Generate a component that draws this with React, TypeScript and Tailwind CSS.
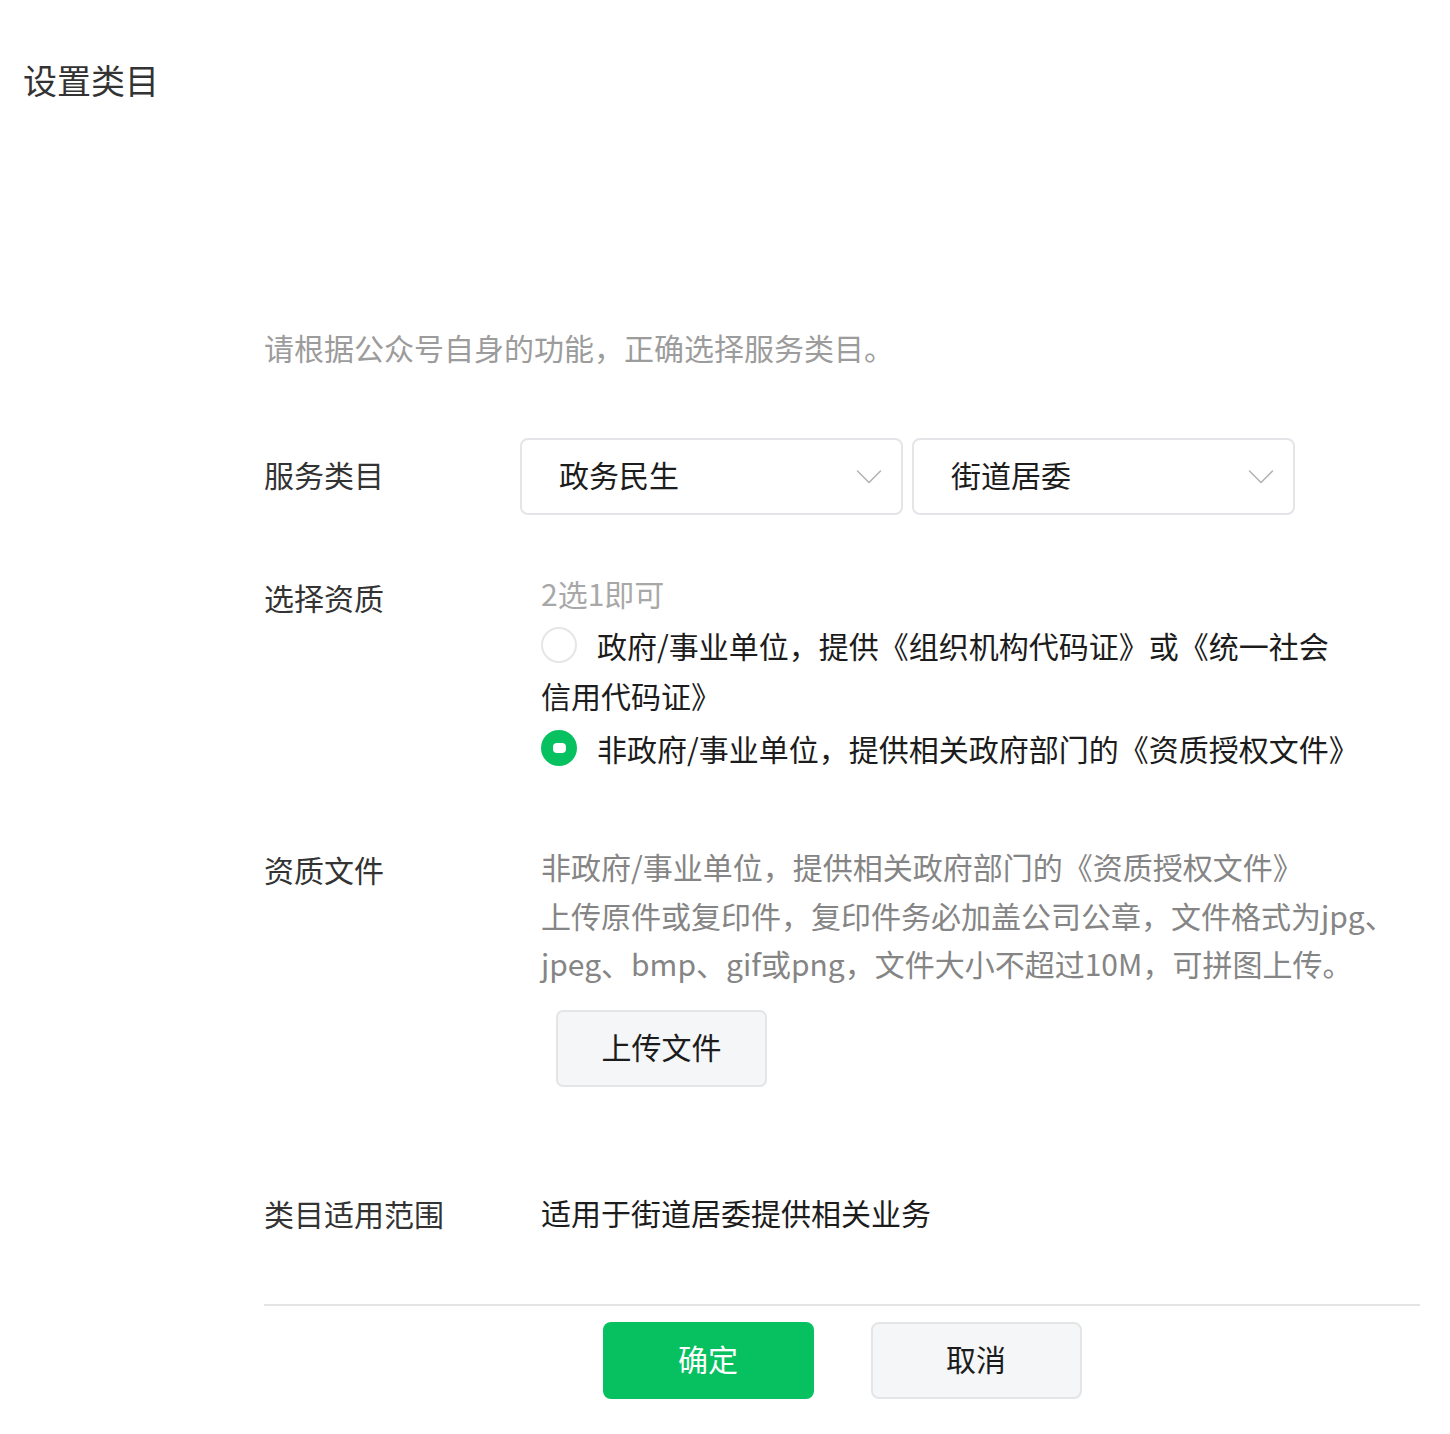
const font = "font-['PingFang_SC','Noto_Sans_CJK_SC',sans-serif]";

const Chevron = () => (
  <svg width="26" height="16" viewBox="0 0 26 16" fill="none" className="shrink-0">
    <path d="M1.5 2 L13 13.5 L24.5 2" stroke="#b4b4b4" strokeWidth="1.6" strokeLinecap="round" strokeLinejoin="round" />
  </svg>
);

const Select = ({ value }: { value: string }) => (
  <div className="flex h-[77px] w-[383px] items-center justify-between rounded-[8px] border-2 border-[#e3e5e8] bg-white pl-[37px] pr-[19px]">
    <span className="pb-[5px] text-[30px] leading-[40px] text-[#1c1c1c]">{value}</span>
    <Chevron />
  </div>
);

const Radio = ({ checked }: { checked?: boolean }) =>
  checked ? (
    <span className="mr-[20px] inline-block h-[36px] w-[36px] rounded-full bg-[#07c160] pt-[13px] align-[-5px]">
      <span className="mx-auto block h-[10px] w-[13px] rounded-[4px] bg-white" />
    </span>
  ) : (
    <span className="mr-[20px] inline-block h-[36px] w-[36px] rounded-full border-2 border-[#e6e6e6] bg-white align-[-5px]" />
  );

export default function App() {
  return (
    <div className={`${font} min-h-[1434px] w-[1450px] bg-white`}>
      <h1 className="pl-[23px] pt-[56px] text-[34px] font-normal leading-[48px] text-[#333]">设置类目</h1>

      <div className="ml-[264px] w-[1156px]">
        <p className="mt-[222px] text-[30px] leading-[42px] text-[#9c9c9c]">
          请根据公众号自身的功能，正确选择服务类目。
        </p>

        {/* 服务类目 */}
        <div className="mt-[70px] flex items-center">
          <div className="w-[256px] pb-[5px] text-[30px] leading-[40px] text-[#333]">服务类目</div>
          <div className="flex gap-[9px]">
            <Select value="政务民生" />
            <Select value="街道居委" />
          </div>
        </div>

        {/* 选择资质 */}
        <div className="mt-[58px] flex">
          <div className="w-[277px] pt-[4px] text-[30px] leading-[40px] text-[#333]">选择资质</div>
          <div className="flex-1">
            <div className="text-[30px] leading-[40px] text-[#a8a8a8]">2选1即可</div>
            <div className="mt-[7px] w-[812px] text-[30px] leading-[50px] text-[#1c1c1c]">
              <Radio />
              政府/事业单位，提供《组织机构代码证》或《统一社会信用代码证》
            </div>
            <div className="mt-[3px] w-[860px] text-[30px] leading-[50px] text-[#1c1c1c]">
              <Radio checked />
              非政府/事业单位，提供相关政府部门的《资质授权文件》
            </div>
          </div>
        </div>

        {/* 资质文件 */}
        <div className="mt-[69px] flex">
          <div className="w-[277px] pt-[7px] text-[30px] leading-[40px] text-[#333]">资质文件</div>
          <div className="flex-1">
            <p className="text-[30px] leading-[48.5px] text-[#858585]">
              非政府/事业单位，提供相关政府部门的《资质授权文件》
              <br />
              上传原件或复印件，复印件务必加盖公司公章，文件格式为jpg、jpeg、bmp、gif或png，文件大小不超过10M，可拼图上传。
            </p>
            <button className="ml-[15px] mt-[22px] h-[77px] w-[211px] rounded-[7px] border-2 border-[#e4e5e7] bg-[#f5f6f8] pb-[4px] text-[30px] text-[#1c1c1c]">
              上传文件
            </button>
          </div>
        </div>

        {/* 类目适用范围 */}
        <div className="mt-[105px] flex">
          <div className="w-[277px] pt-[1px] text-[30px] leading-[40px] text-[#333]">类目适用范围</div>
          <div className="text-[30px] leading-[40px] text-[#1c1c1c]">适用于街道居委提供相关业务</div>
        </div>

        <div className="mt-[71px] h-[2px] bg-[#e4e4e4]" />

        <div className="mt-[16px] flex justify-center gap-[57px]">
          <button className="h-[77px] w-[211px] rounded-[8px] bg-[#07c160] pb-[4px] text-[30px] text-white">确定</button>
          <button className="h-[77px] w-[211px] rounded-[8px] border-2 border-[#e4e5e7] bg-[#f5f6f8] pb-[4px] text-[30px] text-[#1c1c1c]">
            取消
          </button>
        </div>
      </div>
    </div>
  );
}
